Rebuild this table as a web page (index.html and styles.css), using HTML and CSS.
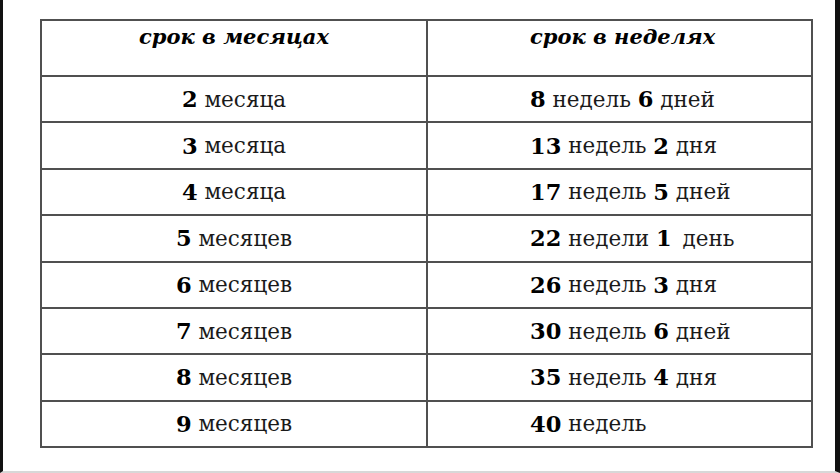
FILE: index.html
```html
<!DOCTYPE html>
<html lang="ru">
<head>
<meta charset="utf-8">
<link rel="stylesheet" href="styles.css">
</head>
<body>
<div class="frame">
  <div class="table">
    <div class="cell head c1">срок в месяцах</div>
    <div class="cell head c2">срок в неделях</div>

    <div class="cell c1"><b>2</b> месяца</div>
    <div class="cell c2"><b>8</b> недель <b>6</b> дней</div>

    <div class="cell c1"><b>3</b> месяца</div>
    <div class="cell c2"><b>13</b> недель <b>2</b> дня</div>

    <div class="cell c1"><b>4</b> месяца</div>
    <div class="cell c2"><b>17</b> недель <b>5</b> дней</div>

    <div class="cell c1"><b>5</b> месяцев</div>
    <div class="cell c2"><b>22</b> недели <b class="gap">1</b> день</div>

    <div class="cell c1"><b>6</b> месяцев</div>
    <div class="cell c2"><b>26</b> недель <b>3</b> дня</div>

    <div class="cell c1"><b>7</b> месяцев</div>
    <div class="cell c2"><b>30</b> недель <b>6</b> дней</div>

    <div class="cell c1"><b>8</b> месяцев</div>
    <div class="cell c2"><b>35</b> недель <b>4</b> дня</div>

    <div class="cell c1"><b>9</b> месяцев</div>
    <div class="cell c2"><b>40</b> недель</div>
  </div>
</div>
</body>
</html>
```
FILE: styles.css
```css
html, body {
  margin: 0;
  padding: 0;
  background: #ffffff;
}

.frame {
  box-sizing: border-box;
  width: 840px;
  height: 473px;
  border-left: 3px solid #111;
  border-right: 5px solid #111;
  border-bottom: 2px solid #d8d8d8;
  padding-top: 19px;
  padding-left: 37px;
  background: #fff;
}

.table {
  box-sizing: border-box;
  width: 773px;
  height: 429px;
  display: grid;
  grid-template-columns: 384px 383px;
  grid-template-rows: 54px repeat(8, 1fr);
  gap: 2px;
  padding: 2px;
  background: #505050;
  font-family: "DejaVu Serif", "Liberation Serif", serif;
  font-size: 21.5px;
  color: #1a1a1a;
}

.cell {
  background: #fff;
  display: flex;
  align-items: center;
  white-space: pre;
}

.cell b {
  font-weight: 700;
  font-size: 22.5px;
  color: #000;
}

.cell b.gap {
  margin-right: 4px;
}

.c1 {
  justify-content: center;
}

.c2 {
  padding-left: 102px;
}

.head {
  align-items: flex-start;
  padding-top: 3px;
  font-size: 21px;
  font-weight: 700;
  font-style: italic;
  color: #000;
}
```
